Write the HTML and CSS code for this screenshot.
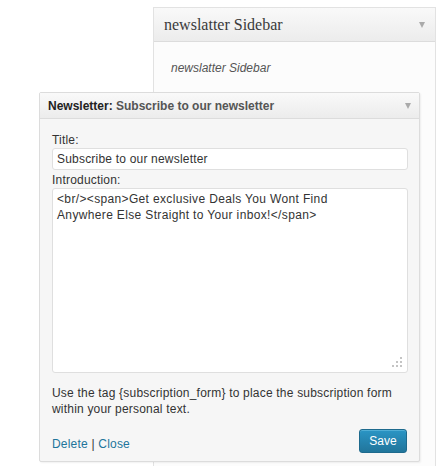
FILE: index.html
```html
<!DOCTYPE html>
<html>
<head>
<meta charset="utf-8">
<link rel="stylesheet" href="styles.css">
</head>
<body>
<div class="page">
  <div class="sidebar">
    <div class="sidebar-head">
      <h3 class="sidebar-title">newslatter Sidebar</h3>
      <span class="arrow"></span>
    </div>
    <div class="sidebar-body">
      <p class="sidebar-desc">newslatter Sidebar</p>
    </div>
  </div>

  <div class="widget">
    <div class="widget-head">
      <h4 class="widget-title"><span class="widget-name">Newsletter:</span> <span class="widget-sub">Subscribe to our newsletter</span></h4>
      <span class="arrow"></span>
    </div>
    <div class="widget-body">
      <label class="field-label">Title:</label>
      <input class="field-input" type="text" value="Subscribe to our newsletter">
      <label class="field-label">Introduction:</label>
      <div class="intro-wrap">
        <textarea class="field-textarea">&lt;br/&gt;&lt;span&gt;Get exclusive Deals You Wont Find
Anywhere Else Straight to Your inbox!&lt;/span&gt;</textarea>
        <svg class="grip" width="12" height="12" viewBox="0 0 12 12">
          <rect x="9" y="1" width="2" height="2" fill="#c4c4c4"/>
          <rect x="5" y="5" width="2" height="2" fill="#c4c4c4"/>
          <rect x="9" y="5" width="2" height="2" fill="#c4c4c4"/>
          <rect x="1" y="9" width="2" height="2" fill="#c4c4c4"/>
          <rect x="5" y="9" width="2" height="2" fill="#c4c4c4"/>
          <rect x="9" y="9" width="2" height="2" fill="#c4c4c4"/>
        </svg>
      </div>
      <p class="help">Use the tag {subscription_form} to place the subscription form<br>within your personal text.</p>
      <div class="widget-foot">
        <div class="links"><a class="link" href="#">Delete</a> | <a class="link" href="#">Close</a></div>
        <button class="save" type="button">Save</button>
      </div>
    </div>
  </div>
</div>
</body>
</html>
```

FILE: styles.css
```css
html, body {
  margin: 0;
  padding: 0;
  background: #ffffff;
  overflow: hidden;
}

.page {
  position: relative;
  width: 439px;
  height: 466px;
  box-sizing: border-box;
  padding-top: 7px;
  font-family: "Liberation Sans", Arial, sans-serif;
  font-size: 12px;
  color: #333;
}

.sidebar {
  margin: 0 0 0 153px;
  width: 283px;
  height: 480px;
  box-sizing: border-box;
  border: 1px solid #e2e2e2;
  background: #fcfcfc;
}

.sidebar-head {
  height: 34px;
  box-sizing: border-box;
  border-bottom: 1px solid #dcdcdc;
  background: linear-gradient(#f9f9f9, #ececec);
  display: flex;
  align-items: center;
  justify-content: space-between;
  padding: 0 10px 0 10px;
}

.sidebar-title {
  margin: 0;
  font-family: "Liberation Serif", "Times New Roman", serif;
  font-weight: normal;
  font-size: 16px;
  color: #3a3a3a;
  line-height: 20px;
}

.arrow {
  width: 0;
  height: 0;
  border-left: 3.5px solid transparent;
  border-right: 3.5px solid transparent;
  border-top: 6px solid #aaaaaa;
}

.sidebar-body {
  padding: 18px 17px 0;
}

.sidebar-desc {
  margin: 0;
  font-style: italic;
  font-size: 12px;
  line-height: 16px;
  color: #555;
}

.widget {
  position: absolute;
  left: 39px;
  top: 92px;
  width: 381px;
  box-sizing: border-box;
  border: 1px solid #dcdcdc;
  border-radius: 2px;
  background: #f6f6f6;
  box-shadow: 1px 1px 2px rgba(0, 0, 0, 0.06);
}

.widget-head {
  height: 26px;
  box-sizing: border-box;
  border-bottom: 1px solid #dcdcdc;
  background: linear-gradient(#f9f9f9, #ececec);
  display: flex;
  align-items: center;
  justify-content: space-between;
  padding: 0 8px 0 8px;
}

.widget-title {
  margin: 0;
  font-size: 12px;
  font-weight: bold;
  line-height: 16px;
}

.widget-name {
  color: #222;
}

.widget-sub {
  color: #555;
}

.widget-body {
  padding: 13px 12px 8px;
  display: flex;
  flex-direction: column;
}

.field-label {
  display: block;
  line-height: 16px;
  color: #333;
  letter-spacing: 0.2px;
}

.field-input {
  margin: 0 0 2px;
  width: 356px;
  height: 22px;
  box-sizing: border-box;
  border: 1px solid #dfdfdf;
  border-radius: 3px;
  background: #fff;
  padding: 0 4px;
  font-family: "Liberation Sans", Arial, sans-serif;
  font-size: 12px;
  letter-spacing: 0.2px;
  color: #333;
  outline: none;
}

.intro-wrap {
  position: relative;
  width: 356px;
  height: 185px;
}

.field-textarea {
  display: block;
  width: 356px;
  height: 185px;
  box-sizing: border-box;
  margin: 0;
  border: 1px solid #dfdfdf;
  border-radius: 3px;
  background: #fff;
  padding: 2px 4px;
  font-family: "Liberation Sans", Arial, sans-serif;
  font-size: 12px;
  line-height: 16px;
  letter-spacing: 0.35px;
  color: #333;
  resize: none;
  outline: none;
  overflow: hidden;
}

.grip {
  position: absolute;
  right: 5px;
  bottom: 5px;
  display: block;
}

.help {
  margin: 12px 0 0;
  line-height: 16px;
  letter-spacing: 0.2px;
  color: #333;
}

.widget-foot {
  margin-top: 12px;
  display: flex;
  justify-content: space-between;
  align-items: center;
}

.links {
  line-height: 16px;
  margin-top: 5px;
  color: #333;
  letter-spacing: 0.2px;
}

.link {
  color: #21759b;
  text-decoration: none;
}

.save {
  width: 48px;
  height: 24px;
  box-sizing: border-box;
  border: 1px solid #1e6a8d;
  border-radius: 3px;
  background: linear-gradient(#2a95c5, #21759b);
  color: #fff;
  font-family: "Liberation Sans", Arial, sans-serif;
  font-size: 12px;
  padding: 0;
  box-shadow: inset 0 1px 0 rgba(120, 200, 230, 0.5);
}
```
